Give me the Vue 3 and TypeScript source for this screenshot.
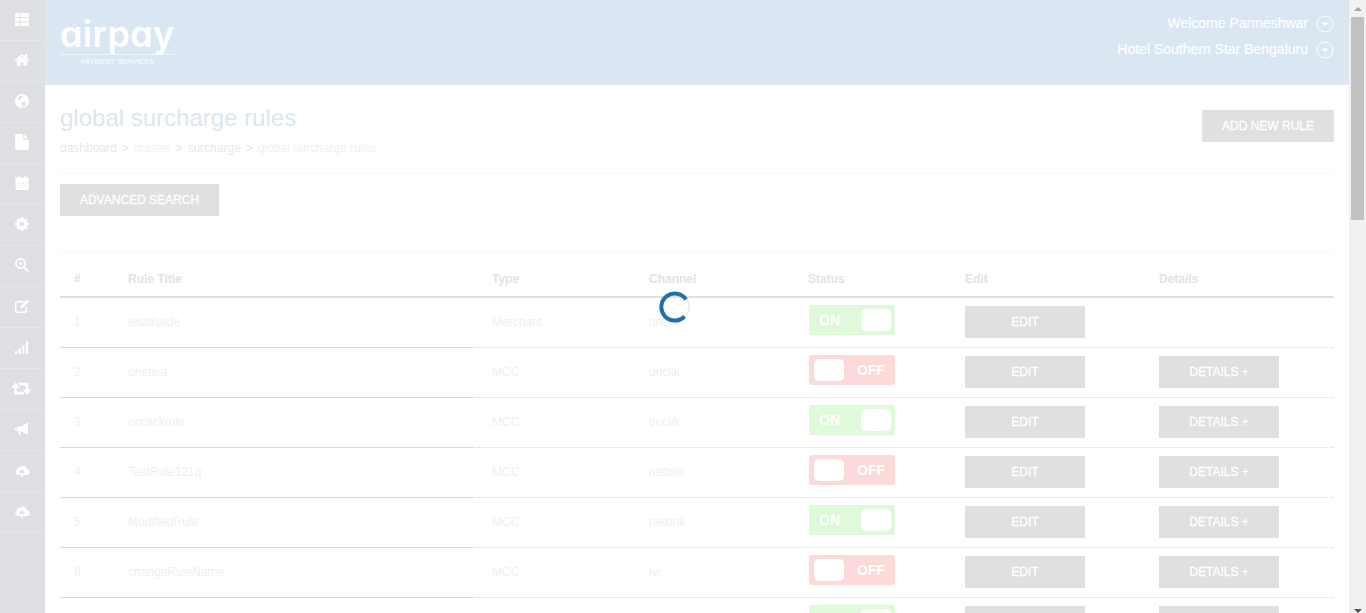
<script setup lang="ts">
interface Rule { id: number; title: string; type: string; channel: string; on: boolean; details: boolean; clipped?: boolean }
interface Icon { box: string; d: string; w?: number; h?: number }
const rules: Rule[] = [
  { id: 1, title: 'testdsade', type: 'Merchant', channel: 'onclik', on: true, details: false },
  { id: 2, title: 'onetest', type: 'MCC', channel: 'onclik', on: false, details: true },
  { id: 3, title: 'onclickrule', type: 'MCC', channel: 'onclik', on: true, details: true },
  { id: 4, title: 'TestRule121q', type: 'MCC', channel: 'netbnk', on: false, details: true },
  { id: 5, title: 'ModifiedRule', type: 'MCC', channel: 'netbnk', on: true, details: true },
  { id: 6, title: 'changeRuleName', type: 'MCC', channel: 'ivr', on: false, details: true },
  { id: 7, title: '', type: '', channel: '', on: true, details: true, clipped: true },
]
const heads = ['#', 'Rule Title', 'Type', 'Channel', 'Status', 'Edit', 'Details']

let calendarGrid = ''
for (const y of [7.8, 10, 12.2]) {
  for (const x of [3.2, 5.8, 8.400, 11]) {
    calendarGrid += `M${x} ${y}h1.400v.6h-1.400z`
  }
}
const small = '0 0 16 16'
const cloud = 'M12.600 7.200A3.500 3.500 0 0 0 6.200 5a2.700 2.700 0 0 0-3.300 2.400A3 3 0 0 0 4 13h2.500v-2.500H4.700L8 7.200l3.300 3.300H9.500V13H13a2.900 2.900 0 0 0-.4-5.800zM6.800 11h2.400v3.500H6.800z'
const icons: Icon[] = [
  { box: small, d: 'M1 2h4.500v4H1zM6.500 2H15v4H6.500zM1 7h4.500v3.500H1zM6.500 7H15v3.500H6.500zM1 11.500h4.500V15H1zM6.500 11.500H15V15H6.500z' },
  { box: '0 0 1792 1792', d: 'M1472 992v480q0 26-19 45t-45 19h-384v-384h-256v384h-384q-26 0-45-19t-19-45v-480q0-1 .5-3t.5-3l575-474 575 474q1 2 1 6zm223-69l-62 74q-8 9-21 11h-3q-13 0-21-7l-692-577-692 577q-12 8-24 7-13-2-21-11l-62-74q-8-10-7-23.500t11-21.500l719-599q32-26 76-26t76 26l244 204v-195q0-14 9-23t23-9h192q14 0 23 9t9 23v408l219 182q10 8 11 21.500t-7 23.500z' },
  { box: small, d: 'M8 1a7 7 0 1 0 0 14A7 7 0 0 0 8 1zM5 3.500l2.200-.8 1.800.4-.4 1.500-1.600.4-.5 1.500-1.600.2-.9-1.200zm3.500 5 3 .6.500 1.800-1.800 2.400-1.600.6-.5-2.300-1.300-1.300z' },
  { box: '0 0 1792 1792', d: 'M1152 512v-472q22 14 36 28l408 408q14 14 28 36h-472zm-128 32q0 40 28 68t68 28h544v1056q0 40-28 68t-68 28h-1344q-40 0-68-28t-28-68v-1600q0-40 28-68t68-28h800v544z' },
  { box: small, d: `M4 1h1.500v1.500H4zM10.500 1H12v1.500h-1.500zM1.500 2.500h13V15h-13z${calendarGrid}` },
  { box: '0 0 1792 1792', d: 'M1152 896q0-106-75-181t-181-75-181 75-75 181 75 181 181 75 181-75 75-181zm512-109v222q0 12-8 23t-20 13l-185 28q-19 54-39 91 35 50 107 138 10 12 10 25t-9 23q-27 37-99 108t-94 71q-12 0-26-9l-138-108q-44 23-91 38-16 136-29 186-7 28-36 28h-222q-14 0-24.500-8.500t-11.500-21.500l-28-184q-49-16-90-37l-141 107q-10 9-25 9-14 0-25-11-126-114-165-168-7-10-7-23 0-12 8-23 15-21 51-66.500t54-70.500q-27-50-41-99l-183-27q-13-2-21-12.500t-8-23.500v-222q0-12 8-23t19-13l186-28q14-46 39-92-40-57-107-138-10-12-10-24 0-10 9-23 26-36 98.500-107.500t94.500-71.500q13 0 26 10l138 107q44-23 91-38 16-136 29-186 7-28 36-28h222q14 0 24.500 8.500t11.500 21.500l28 184q49 16 90 37l142-107q9-9 24-9 13 0 25 10 129 119 165 170 7 8 7 22 0 12-8 23-15 21-51 66.500t-54 70.500q26 50 41 98l183 28q13 2 21 12.500t8 23.500z' },
  { box: small, d: 'M6.500 1a5.500 5.500 0 0 1 4.400 8.800l4.300 4.300-1.300 1.300-4.300-4.300A5.500 5.500 0 1 1 6.500 1zm0 1.800a3.700 3.700 0 1 0 0 7.400 3.700 3.700 0 0 0 0-7.400zM6 4.500h1V6h1.500v1H7v1.500H6V7H4.500V6H6z' },
  { box: small, d: 'M3 3h7L8.500 4.500H3.300A.8.8 0 0 0 2.500 5.300v7.400c0 .4.400.8.800.8h7.400c.4 0 .8-.4.800-.8V9.500L13 8v5c0 1.100-.9 2-2 2H3c-1.100 0-2-.9-2-2V5c0-1.100.9-2 2-2zM13 1.500 15 3.500 8.500 10H6.500V8z' },
  { box: small, d: 'M1 12h2.200v3H1zM4.600 9.500h2.200V15H4.600zM8.200 6.500h2.200V15H8.200zM11.800 2h2.200v13h-2.200z' },
  { box: '0 0 1920 1792', w: 20, h: 18, d: 'M1216 1504q0 13-9.500 22.500t-22.500 9.500h-960q-8 0-13.500-2t-9-7-5.500-8-3-11.500-1-11.500v-600h-192q-26 0-45-19t-19-45q0-24 15-41l320-384q19-22 49-22t49 22l320 384q15 17 15 41 0 26-19 45t-45 19h-192v384h576q16 0 25 11l160 192q7 10 7 21zm640-416q0 24-15 41l-320 384q-20 23-49 23t-49-23l-320-384q-15-17-15-41 0-26 19-45t45-19h192v-384h-576q-16 0-25-12l-160-192q-7-9-7-20 0-13 9.500-22.500t22.500-9.500h960q8 0 13.500 2t9 7 5.500 8 3 11.500 1 11.500v600h192q26 0 45 19t19 45z' },
  { box: small, d: 'M14 2v11h-1.200L7 10.500H3.500L3 10V6l.5-.5H7L12.800 2zM1 6.500h1.500v3H1zM4 11h2.200l.8 3H5z' },
  { box: small, d: cloud },
  { box: small, d: cloud },
]
</script>

<template>
  <div class="page">
    <nav class="rail">
      <div v-for="(icon, i) in icons" :key="i" class="rail-item">
        <svg class="rail-icon" :viewBox="icon.box" :width="icon.w ?? 16" :height="icon.h ?? 16"><path :d="icon.d" fill="#fff" fill-rule="evenodd" /></svg>
      </div>
    </nav>

    <div class="main">
      <header class="top">
        <div class="logo">
          <div class="logo-word">airpay</div>
          <div class="logo-sub">PAYMENT SERVICES</div>
        </div>
        <div class="user">
          <div class="user-row">
            <span>Welcome Parmeshwar</span>
            <svg viewBox="0 0 18 18" width="18" height="18"><circle cx="9" cy="9" r="8" fill="none" stroke="#fff" /><path d="M5.500 7.500h7L9 11z" fill="#fff" /></svg>
          </div>
          <div class="user-row">
            <span>Hotel Southern Star Bengaluru</span>
            <svg viewBox="0 0 18 18" width="18" height="18"><circle cx="9" cy="9" r="8" fill="none" stroke="#fff" /><path d="M5.500 7.500h7L9 11z" fill="#fff" /></svg>
          </div>
        </div>
      </header>

      <section class="content">
        <div class="title-row">
          <div>
            <h1>global surcharge rules</h1>
            <div class="crumbs">
              <span class="c-dark">dashboard</span><i>&gt;</i>
              <span class="c-light">master</span><i>&gt;</i>
              <span class="c-dark">surcharge</span><i>&gt;</i>
              <span class="c-light">global surcharge rules</span>
            </div>
          </div>
          <button class="btn add">ADD NEW RULE</button>
        </div>
        <div class="search-row">
          <button class="btn search">ADVANCED SEARCH</button>
        </div>

        <div class="grid head">
          <div v-for="h in heads" :key="h" class="cell">{{ h }}</div>
        </div>
        <div v-for="r in rules" :key="r.id" class="grid row">
          <div class="cell">{{ r.clipped ? '' : r.id }}</div>
          <div class="cell">{{ r.title }}</div>
          <div class="cell">{{ r.type }}</div>
          <div class="cell">{{ r.channel }}</div>
          <div class="cell status">
            <div class="toggle" :class="r.on ? 'on' : 'off'">
              <span v-if="r.on" class="t-label">{{ r.clipped ? '' : 'ON' }}</span>
              <span class="knob"></span>
              <span v-if="!r.on" class="t-label">OFF</span>
            </div>
          </div>
          <div class="cell action"><button class="btn wide">{{ r.clipped ? '' : 'EDIT' }}</button></div>
          <div class="cell action"><button v-if="r.details" class="btn wide">{{ r.clipped ? '' : 'DETAILS +' }}</button></div>
        </div>
      </section>
    </div>

    <div class="scrollbar">
      <span class="arrow up"></span>
      <span class="thumb"></span>
      <span class="arrow down"></span>
    </div>

    <svg class="spinner" viewBox="0 0 32 32" width="32" height="32">
      <circle cx="16" cy="16" r="14.200" fill="none" stroke="#cfe3f1" stroke-width="1" />
      <path d="M27 8.500A13.500 13.500 0 1 0 25.500 25.500" fill="none" stroke="#1f72a8" stroke-width="4" />
    </svg>
  </div>
</template>

<style>
html, body { margin: 0; overflow: hidden; background: #fff; }
</style>

<style scoped>
.page {
  position: relative;
  display: flex;
  width: 1366px;
  height: 613px;
  overflow: hidden;
  font-family: "Liberation Sans", Arial, sans-serif;
  background: #fff;
}
.rail { width: 45px; flex: none; background: #dedfe3; }
.rail-item {
  height: 40px;
  display: flex;
  align-items: center;
  justify-content: center;
  border-bottom: 1px solid #e6e6e9;
}
.rail-icon { margin-left: -1px; margin-top: -3px; }
.main { flex: 1; min-width: 0; }
.top {
  height: 85px;
  background: #dae7f3;
  display: flex;
  justify-content: space-between;
  padding: 0 15px;
  color: #fff;
}
.logo { width: 115px; }
.logo-word {
  font-family: Inter, "Liberation Sans", sans-serif;
  font-feature-settings: "cv11" 1;
  font-weight: 600;
  font-size: 36px;
  line-height: 36px;
  height: 55px;
  padding-top: 16px;
  box-sizing: border-box;
  border-bottom: 1px solid #eef4f9;
  letter-spacing: .3px;
  white-space: nowrap;
}
.logo-sub {
  text-align: center;
  font-size: 7px;
  line-height: 12px;
  padding-top: 1px;
  letter-spacing: .2px;
  white-space: nowrap;
}
.user { padding-top: 10px; }
.user-row {
  height: 26px;
  display: flex;
  justify-content: flex-end;
  align-items: center;
  gap: 8px;
  font-size: 14px;
  line-height: 18px;
  -webkit-text-stroke: .2px #fff;
}
.user-row svg { margin-top: 2px; }
.content { padding: 0 15px; }
.title-row {
  display: flex;
  justify-content: space-between;
  align-items: flex-start;
  height: 89px;
  border-bottom: 1px dotted #f1f1f1;
  box-sizing: border-box;
}
h1 {
  margin: 19px 0 0;
  font-size: 24px;
  line-height: 27px;
  font-weight: 400;
  color: #dae7f3;
}
.crumbs { margin-top: 10px; font-size: 12px; line-height: 14px; white-space: nowrap; }
.crumbs i { font-style: normal; color: #dae7f3; margin: 0 5px; }
.c-dark { color: #e8e8e8; }
.c-light { color: #f1f1f1; }
.btn {
  display: block;
  border: 0;
  padding: 0;
  height: 32px;
  background: #e0e0e0;
  color: #fff;
  font-family: inherit;
  font-size: 12px;
  font-weight: 400;
  white-space: nowrap;
  -webkit-text-stroke: .3px #fff;
}
.add { width: 132px; margin-top: 25px; }
.search { width: 159px; }
.search-row {
  height: 79px;
  padding-top: 10px;
  box-sizing: border-box;
  border-bottom: 1px dotted #f1f1f1;
}
.grid {
  position: relative;
  display: grid;
  grid-template-columns: 54px 364px 157px 159px 157px 194px 189px;
  font-size: 12px;
}
.cell { padding-left: 14px; display: flex; align-items: center; }
.head {
  height: 45px;
  box-sizing: border-box;
  border-bottom: 2px solid #e0e0e0;
  color: #e3e3e3;
  font-weight: 700;
  padding-top: 9px;
}
.row {
  height: 50px;
  box-sizing: border-box;
  border-bottom: 1px dotted #d4d4d4;
  color: #efefef;
}
.row .cell { padding-bottom: 2px; }
.row::after {
  content: "";
  position: absolute;
  left: 0;
  bottom: -1px;
  width: 413px;
  height: 1px;
  background: #d8d8d8;
}
.row .status { padding-left: 15px; padding-bottom: 5px; }
.row .action { padding-bottom: 1px; }
.wide { width: 120px; }
.toggle {
  width: 86px;
  height: 30px;
  border-radius: 3px;
  display: flex;
  align-items: center;
  justify-content: space-between;
  box-sizing: border-box;
  padding: 0 4px;
  color: #fff;
  font-size: 14px;
  font-weight: 700;
}
.toggle.on { background: #e0f9da; padding-left: 10px; }
.toggle.off { background: #fdd9da; padding-left: 5px; padding-right: 10px; }
.knob { width: 30px; height: 22px; border-radius: 5px; background: #fff; }
.scrollbar {
  width: 17px;
  flex: none;
  background: #f1f1f1;
  position: relative;
}
.thumb { position: absolute; top: 17px; left: 2px; width: 13px; height: 203px; background: #c1c1c1; }
.arrow { position: absolute; width: 0; height: 0; border: 4px solid transparent; left: 4.500px; }
.arrow.up { top: 3px; border-bottom: 4px solid #a3a3a3; }
.arrow.down { bottom: -4px; border-top: 4px solid #505050; }
.spinner { position: absolute; left: 659px; top: 291px; }
</style>
